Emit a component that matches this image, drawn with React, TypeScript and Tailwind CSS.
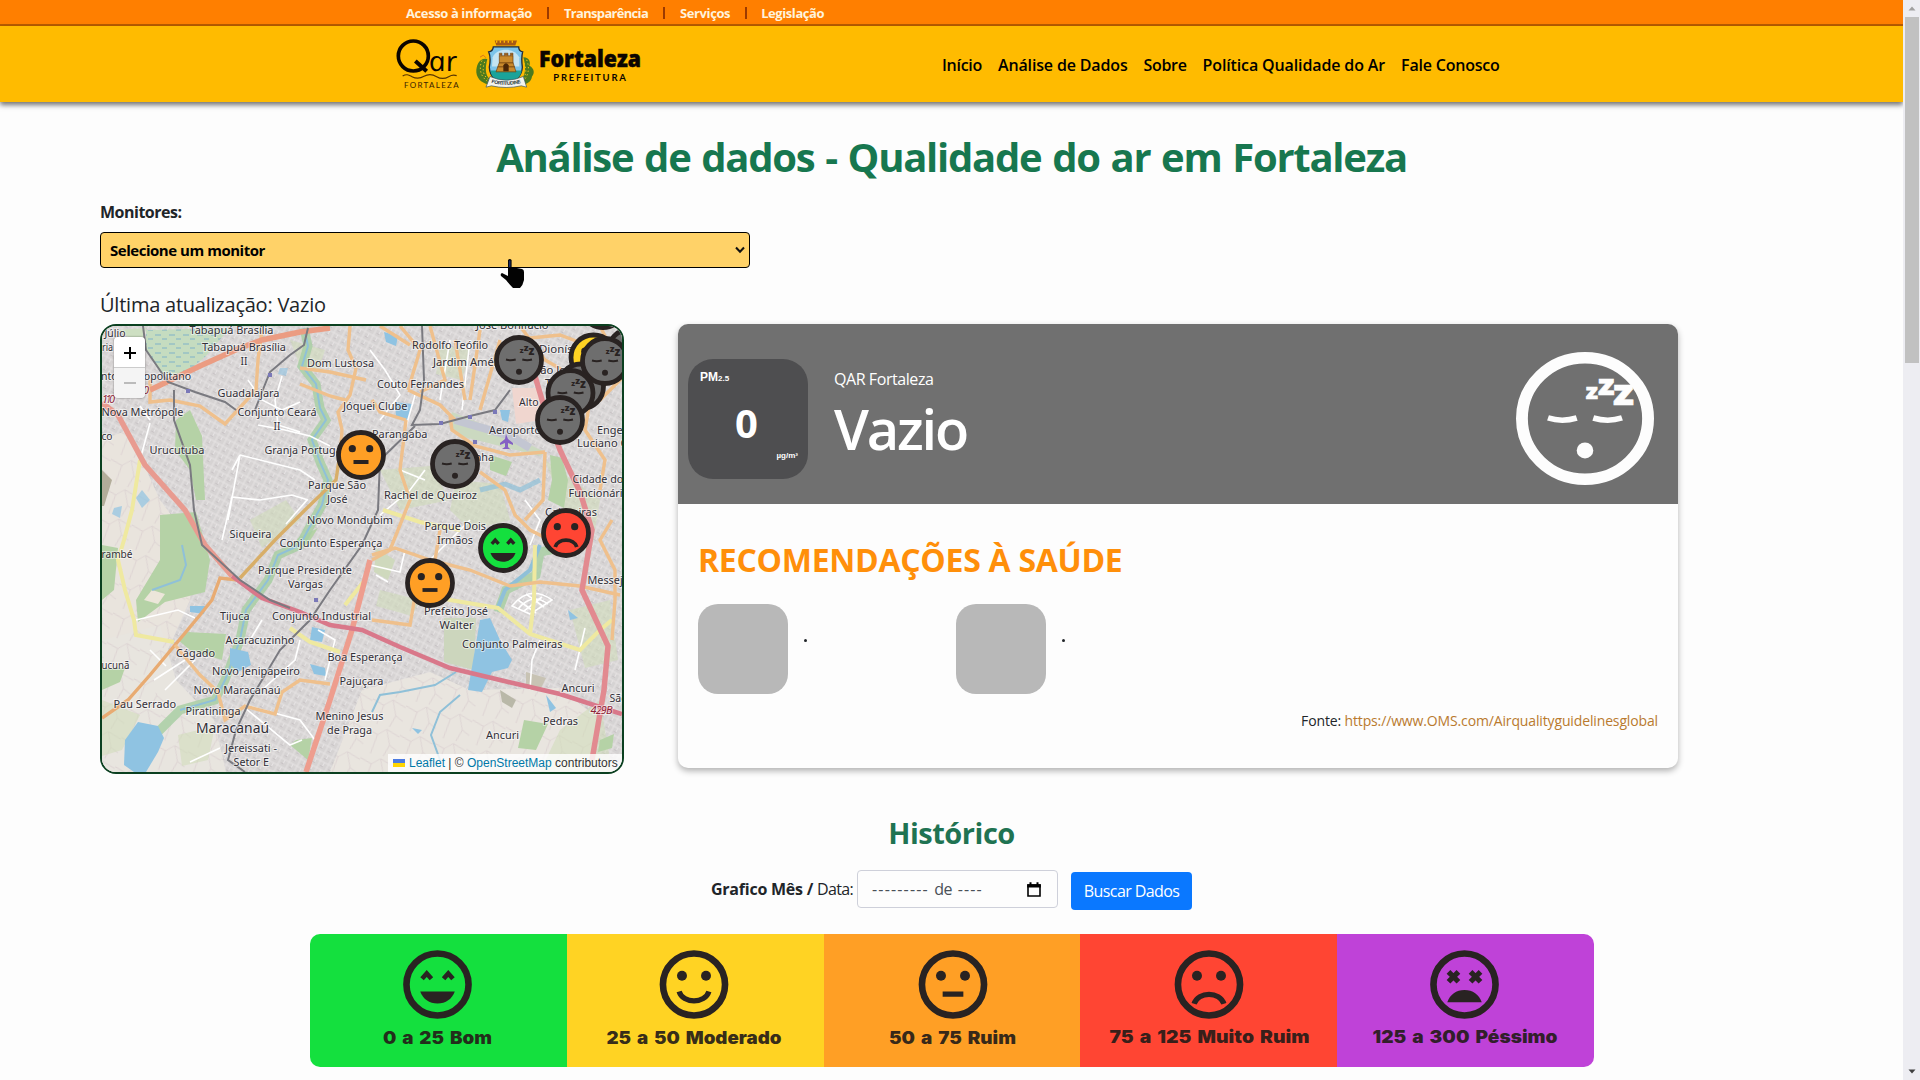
import React from "react";

type Mood = "good" | "moderate" | "neutral" | "sad" | "dead" | "sleep";

const moodColor: Record<Mood, string> = {
  good: "#14e03e",
  moderate: "#ffd323",
  neutral: "#ff9f25",
  sad: "#ff4533",
  dead: "#bf42d8",
  sleep: "#6e6e6e",
};

/* Face drawn around the origin, 25 units in radius */
function Face({ mood, fill, ink = "#292322" }: { mood: Mood; fill: string; ink?: string }) {
  return (
    <g>
      <circle r="22.5" fill={fill} stroke={ink} strokeWidth="4.8" />
      {(mood === "moderate" || mood === "neutral" || mood === "sad") && (
        <g fill={ink}>
          <circle cx="-8.7" cy="-6.3" r="3.6" />
          <circle cx="8.7" cy="-6.3" r="3.6" />
        </g>
      )}
      {mood === "good" && (
        <g>
          <path d="M-11.2 -4.2L-7.8 -8L-4.4 -4.2M4.4 -4.2L7.8 -8L11.2 -4.2" fill="none" stroke={ink} strokeWidth="3.4" />
          <path d="M-12.5 5H12.5C10.5 10.500 6 13.700 0 13.700S-10.500 10.500 -12.500 5Z" fill={ink} />
        </g>
      )}
      {mood === "moderate" && <path d="M-10.8 5C-8 14.200 8 14.200 10.800 5" fill="none" stroke={ink} strokeWidth="3.8" />}
      {mood === "neutral" && <path d="M-7.500 7H7.500" stroke={ink} strokeWidth="3.8" />}
      {mood === "sad" && <path d="M-10.800 14C-8 4.800 8 4.800 10.800 14" fill="none" stroke={ink} strokeWidth="3.8" />}
      {mood === "dead" && (
        <g>
          <path d="M-11.600 -9.200L-4.400 -2M-4.400 -9.200L-11.600 -2M4.400 -9.200L11.600 -2M11.600 -9.200L4.400 -2" stroke={ink} strokeWidth="3.800" />
          <path d="M-12.500 12.800H12.500C10.500 7.300 6 4 0 4S-10.500 7.300 -12.500 12.800Z" fill={ink} />
        </g>
      )}
      {mood === "sleep" && (
        <g>
          <path d="M-13 -.500Q-8.300 1 -3.300 -.500M3.300 -.500Q8.300 1 13 -.500" fill="none" stroke={ink} strokeWidth="1.900" />
          <circle cy="11.700" r="3" fill={ink} />
          <g fill={ink} fontFamily="'Open Sans', sans-serif" fontWeight="800">
            <text x=".8" y="-7.400" fontSize="7.500">z</text>
            <text x="4.800" y="-9" fontSize="9.500">z</text>
            <text x="9.500" y="-5.200" fontSize="11.500">z</text>
          </g>
        </g>
      )}
    </g>
  );
}

function QarLogo() {
  return (
    <svg viewBox="50 115 192 156" className="h-[52px] w-16">
      <g fill="#0b0500" fontFamily="Lato, sans-serif">
        <circle cx="102" cy="169" r="45" fill="none" stroke="#0b0500" strokeWidth="11" />
        <path d="M108 184L142 215" stroke="#0b0500" strokeWidth="12" />
        <g transform="translate(153 215) skewX(12)">
          <text fontFamily="'Open Sans', sans-serif" fontStyle="italic" fontSize="83" textLength="86" lengthAdjust="spacingAndGlyphs">ar</text>
        </g>
        <path d="M70 229C82 222 88 226 98 231S120 238 134 230S160 224 172 231S196 238 208 231S226 226 232 228" fill="none" stroke="#5a3600" strokeWidth="3.500" />
        <text x="74" y="265" fontSize="24" textLength="164" fill="#3a2200">FORTALEZA</text>
      </g>
    </svg>
  );
}

function CoatOfArms() {
  return (
    <svg viewBox="285 115 180 155" className="h-[52px] w-[60px]">
      <g fill="#4c7a1e">
        <path d="M322 178C300 172 288 195 289 218C291 240 312 255 336 254L330 238C314 226 316 200 322 178Z" />
        <path d="M430 172C450 172 452 190 448 198C464 206 464 222 456 230C454 246 440 256 420 254L424 238C438 222 438 200 430 172Z" />
      </g>
      <g stroke="#f5c21c" strokeWidth="3" strokeDasharray="4 7" fill="none">
        <path d="M306 182C296 205 300 232 328 248M314 186C306 208 308 226 326 240" />
        <path d="M440 180C450 204 446 232 424 248M432 190C440 208 440 226 426 240" />
      </g>
      <path d="M300 172L310 166L318 174" stroke="#d8751c" strokeWidth="3" fill="none" />
      <path d="M344 122H411L406 137H349Z" fill="#a85a14" />
      <path d="M350 122V129M361 122V129M373 122V129M385 122V129M397 122V129" stroke="#ffba00" strokeWidth="4" />
      <path d="M340 141H416C416 151 421 155 428 156C424 170 425 186 427 202C426 232 402 244 378 258C350 244 329 232 328 202C331 186 332 170 326 156C335 155 339 151 340 141Z" fill="#7cc4ea" stroke="#1f2a3a" strokeWidth="4" />
      <path d="M338 172C346 156 360 150 378 150S410 158 418 172V200H336Z" fill="#c4e4f2" />
      <path d="M331 212H425C422 236 400 246 378 256C354 246 334 236 331 212Z" fill="#1aa39a" />
      <path d="M348 216L358 188V168H399V188L408 216Z" fill="#c98a2c" stroke="#6b3c0c" strokeWidth="2" />
      <path d="M358 168V160H366V168M373 168V160H384V168M391 168V160H399V168" fill="#9b5f1c" stroke="#6b3c0c" strokeWidth="1.500" />
      <path d="M357 189H400M353 201H404" stroke="#6b3c0c" strokeWidth="2.500" />
      <path d="M370 214V196Q378 184 386 196V214Z" fill="#4a2606" />
      <path d="M318 262L330 230Q378 252 430 230L440 262L424 258Q378 268 334 258Z" fill="#f4f4ee" stroke="#34505c" strokeWidth="2" />
      <path id="motto" d="M334 249Q380 262 428 248" fill="none" />
      <text fontFamily="'Liberation Sans', sans-serif" fontWeight="700" fontSize="15" fill="#26323a">
        <textPath href="#motto" textLength="90">FORTITUDINE</textPath>
      </text>
    </svg>
  );
}

/* Place name, left edge, baseline, drawn width */
const places: [string, number, number, number][] = [
  ["Júlio", 104.500, 337, 21],
  ["ria", 102, 351, 11],
  ["nto Metropolitano", 101, 379.500, 90],
  ["Tabapuá Brasília", 189.500, 334, 84],
  ["Tabapuá Brasília", 202, 350.500, 84],
  ["II", 240.500, 364.500, 7],
  ["Guadalajara", 217.500, 396.500, 62],
  ["Conjunto Ceará", 237.500, 416, 79],
  ["II", 273.500, 430, 7],
  ["Nova Metrópole", 101.500, 416, 82],
  ["co", 101.500, 439.500, 11],
  ["Urucutuba", 149.500, 454, 55],
  ["Granja Portugal", 264.500, 454, 80],
  ["Dom Lustosa", 307, 366.500, 67],
  ["Jóquei Clube", 343, 410, 64.500],
  ["Parque São", 308, 488.500, 58],
  ["José", 327, 503, 20.500],
  ["Novo Mondubim", 307, 523.500, 86],
  ["Siqueira", 229.500, 537.500, 42],
  ["Conjunto Esperança", 279.500, 547, 103],
  ["José Bonifácio", 476, 329, 72.500],
  ["Rodolfo Teófilo", 412, 348.500, 76],
  ["Jardim América", 433, 366, 80],
  ["Couto Fernandes", 377, 388, 87],
  ["Dionísio Torres", 539, 352.500, 80],
  ["São João do", 534, 373.500, 62],
  ["Tauape", 545, 387, 40],
  ["Alto", 519, 405.500, 19.500],
  ["Aeroporto", 489, 434, 52],
  ["Parangaba", 372, 438, 55.500],
  ["Engenheiro", 597, 433.500, 59],
  ["Luciano Cavalcante", 577, 447, 100],
  ["Cidade dos", 572.500, 482.500, 56],
  ["Funcionários", 568.500, 496.500, 66],
  ["Cajazeiras", 545, 516, 52],
  ["Serrinha", 451, 461, 43],
  ["Rachel de Queiroz", 384, 499, 93],
  ["Parque Dois", 424.500, 530, 61.500],
  ["Irmãos", 437, 544, 36],
  ["rambé", 101.500, 557.500, 31],
  ["Parque Presidente", 258, 573.500, 94],
  ["Vargas", 288, 588, 35],
  ["Tijuca", 220, 619.500, 29.500],
  ["Conjunto Industrial", 272, 619.500, 99],
  ["Acaracuzinho", 225.500, 644, 69],
  ["Cágado", 176, 656.500, 39],
  ["Boa Esperança", 327.500, 660.500, 75],
  ["ucunã", 101.500, 668.500, 28],
  ["Novo Jenipapeiro", 212, 674.500, 88],
  ["Pajuçara", 339.500, 685, 44],
  ["Novo Maracanaú", 193.500, 693.500, 87],
  ["Pau Serrado", 113.500, 708, 62.500],
  ["Piratininga", 185.500, 714.500, 55],
  ["Menino Jesus", 315.500, 720, 68],
  ["de Praga", 327, 734, 45],
  ["Jereissati -", 225, 751.500, 52],
  ["Setor E", 233.500, 766, 35.500],
  ["Messejana", 587.500, 583.500, 54],
  ["Prefeito José", 424, 615, 64],
  ["Walter", 439.500, 629, 34],
  ["Conjunto Palmeiras", 462, 648, 100.500],
  ["Ancuri", 561.500, 691.500, 33],
  ["São Bento", 609.500, 702, 50],
  ["Pedras", 543, 724.500, 35],
  ["Ancuri", 486, 739, 33],
];

const markers: [number, number, Mood][] = [
  [603, 305, "sleep"],
  [630, 352, "sleep"],
  [361, 455, "neutral"],
  [593.500, 357.500, "moderate"],
  [581, 386.500, "sleep"],
  [605, 361, "sleep"],
  [570.500, 393, "sleep"],
  [519, 360, "sleep"],
  [560, 420, "sleep"],
  [455, 464, "sleep"],
  [503, 548, "good"],
  [566, 533, "sad"],
  [430, 583, "neutral"],
];

function MapCanvas() {
  return (
    <svg viewBox="102 326 520 446" className="block h-[446px] w-[520px]">
      <defs>
        <pattern id="streets" width="9" height="8" patternUnits="userSpaceOnUse" patternTransform="rotate(28)">
          <rect width="9" height="8" fill="#d6d3d3" />
          <path d="M0 1H9M1 0V8M5.500 1V5" stroke="#e6e3e4" strokeWidth="1" />
          <path d="M3 5.500H6" stroke="#c4bfc1" strokeWidth=".8" />
        </pattern>
        <pattern id="rural" width="34" height="30" patternUnits="userSpaceOnUse" patternTransform="rotate(12)">
          <path d="M0 6L12 10L20 3L34 8M12 10L9 30M20 3L26 18L22 30M26 18L34 22" fill="none" stroke="#dcd3d2" strokeWidth=".9" />
        </pattern>
        <pattern id="marsh" width="14" height="9" patternUnits="userSpaceOnUse">
          <rect width="14" height="9" fill="#c5dcc0" />
          <path d="M1 2H7M8 6H13" stroke="#7fb3c8" strokeWidth="1" />
        </pattern>
      </defs>
      <rect x="102" y="326" width="520" height="446" fill="url(#streets)" />

      {/* open land */}
      <path d="M102 440L128 430L160 500L196 548L190 600L150 690L102 700Z" fill="#e9e4dd" />
      <path d="M102 640L160 625L176 680L214 720L226 772H102Z" fill="#e8e5df" />
      <path d="M362 690L430 672L470 690L560 688L600 720L590 772H330Z" fill="#e9e5df" />
      <path d="M102 440L128 430L160 500L196 548L190 600L150 690L214 720L226 772H102Z" fill="url(#rural)" />
      <path d="M362 690L430 672L470 690L560 688L600 720L590 772H330Z" fill="url(#rural)" />

      {/* lightly wooded blocks */}
      <g fill="#cfdcb8" opacity=".55">
        <path d="M380 470L430 466L450 500L400 510Z" />
        <path d="M456 480L500 484L510 520L470 530L450 510Z" />
        <path d="M570 610L610 600L618 660L585 668Z" />
        <path d="M545 460L600 500L590 560L560 500Z" />
        <path d="M380 590L420 600L412 616L376 606Z" />
        <path d="M560 730L600 700L612 772H540Z" />
        <path d="M290 340L325 350L318 372L300 366Z" />
        <path d="M440 345L470 350L462 380L436 374Z" />
        <path d="M102 700L140 715L122 750L102 756Z" />
        <path d="M178 735L215 726L208 760L182 766Z" />
        <path d="M250 520L286 500L300 520L262 548Z" />
      </g>

      {/* vegetation */}
      <g fill="#b5d2a6">
        <path d="M146 330L230 328L206 356L180 378L160 372L146 350Z" fill="url(#marsh)" />
        <path d="M176 420L190 410L202 436L205 500L196 500L190 470L175 450Z" />
        <path d="M160 515L196 512L210 560L205 592L165 602L138 622L136 600L160 560Z" />
        <path d="M102 545L118 548L114 590L102 600Z" />
        <path d="M102 470L112 480L104 506H102Z" fill="#b3ad9a" />
        <path d="M186 632L226 634L222 660L190 650L178 640Z" />
        <path d="M102 668L125 668L120 682L102 690Z" />
        <path d="M296 740L312 738L308 760L290 745Z" />
        <path d="M452 412L482 424L520 440L545 452L540 456L500 446L460 436L448 424Z" fill="#cbd9c0" />
        <path d="M550 455L562 458L568 480L564 508L548 500L552 480Z" />
        <path d="M444 618L476 618L474 670L444 662Z" fill="#ccd6bd" />
        <path d="M524 720L548 724L536 750L518 748Z" />
        <path d="M376 548L395 560L388 580L374 572Z" fill="#cfd9bd" />
        <path d="M600 740L614 734L612 748L598 752Z" />
        <path d="M526 672L546 678L540 690L526 684Z" fill="#c8c3b4" />
        <path d="M500 690L516 700L512 708L502 702Z" fill="#b9b8a8" />
        <path d="M118 330L146 328L140 345Z" fill="#cddfc2" />
        <path d="M490 455L512 462L506 476L490 470Z" />
        <path d="M298 538L318 528L308 544L292 548Z" />
      </g>
      <path d="M152 590L165 594L158 604L144 600Z" fill="#ece6da" />
      <path d="M512 388H541V420L516 424Z" fill="#f0d6cf" />
      <path d="M455 420L510 436L530 448" stroke="#c3c6d2" strokeWidth="8" fill="none" />

      {/* rivers with green banks */}
      <g fill="none" stroke="#a9cfa4" strokeWidth="9" opacity=".85">
        <path d="M304 328L308 346L302 366L316 384L320 408L326 420L312 440L320 462L328 480L322 505L308 530L300 545L278 555L268 580L246 610L240 640L225 680L215 700L180 710L150 740" />
        <path d="M560 548L540 552L536 575L506 590L498 612" />
      </g>
      <g fill="none" stroke="#8fc0d8" strokeWidth="2">
        <path d="M304 328L308 346L302 366L316 384L320 408L326 420L312 440L320 462L328 480L322 505L308 530L300 545L278 555L268 580L246 610L240 640L225 680L215 700L180 710" />
        <path d="M182 545L186 565L180 580L152 590" />
        <path d="M456 672L435 685L400 692L380 695L372 712" />
        <path d="M460 695L440 712L431 735L440 760" />
        <path d="M540 480L520 490L505 484L480 490" strokeWidth="5" opacity=".7" />
        <path d="M540 545L530 570L505 590L497 610" strokeWidth="4" />
      </g>

      {/* lakes */}
      <g fill="#8fc3e2">
        <path d="M125 740L138 722L158 726L164 738L158 752L146 772H134L124 765Z" />
        <path d="M230 648L248 652L251 665L238 672L230 664Z" />
        <path d="M312 627L325 630L322 642L310 640Z" />
        <path d="M310 664L325 668L326 676L314 674Z" />
        <path d="M190 606L206 606L204 614L190 612Z" />
        <path d="M480 620L490 618L500 640L512 660L508 668L492 672L482 692L468 690L474 655Z" />
        <path d="M395 402L412 404L408 420L396 416Z" />
        <path d="M384 332L398 336L396 346L386 342Z" />
        <path d="M568 610L578 618L570 620Z" />
        <path d="M546 695L556 708L550 712Z" />
        <path d="M280 368L288 368L286 376L278 374Z" opacity=".6" />
        <path d="M142 490L150 500L142 508L136 498Z" opacity=".7" />
        <path d="M500 410L510 410L508 422L502 420Z" />
        <path d="M412 728L422 730L418 734Z" />
        <path d="M114 508L122 506L120 518L112 514Z" opacity=".7" />
      </g>

      {/* tertiary streets */}
      <g fill="none" stroke="#fff" strokeWidth="1.600">
        <path d="M240 455L300 470L315 480M232 497L260 500L292 495L308 500M232 497L222 540M240 455L228 520M248 380L262 400L282 410L300 402M282 376L275 400L278 425L300 432M258 425L285 430L310 436L330 446M286 524L307 500M232 470L240 455M140 406L150 420M150 423L140 460" />
        <path d="M136 620L178 610L195 618M150 650L166 666M154 680L185 660M165 690L195 660M250 640L262 620M300 640L295 660L262 690M318 630L335 640L325 680M245 705L300 720L315 740M245 708L290 745L302 740M190 762L220 748" />
        <path d="M380 515L410 490L425 470M400 470L425 480M415 395L405 430M370 350L385 370L400 395L380 420M450 340L440 400M470 340L462 410M370 565L400 572L405 550M376 575L388 582M410 620L414 600L420 590M530 690L532 660L540 640M430 560L450 540L470 520M585 628L575 670M525 500L540 520L530 545" />
        <path d="M512 606Q530 584 552 600L530 614ZM518 609Q532 592 548 604M524 611L542 597M518 600L536 613M526 594L544 607" />
      </g>

      {/* secondary roads */}
      <g fill="none" stroke="#efe9a0" strokeWidth="4">
        <path d="M140 460L132 510L124 540L118 560L125 590L134 620L136 635L174 642" />
        <path d="M290 628L310 642L340 652M420 592L450 600L498 608L530 634L580 650L600 630L612 620" />
        <path d="M535 545L534 600L530 634M365 580L345 605" />
        <path d="M383 510L420 522L460 530" />
      </g>
      <g fill="none" stroke="#efc08c" strokeWidth="3.400">
        <path d="M262 330L258 360L256 390L225 424L200 406L170 400L150 402L150 380" />
        <path d="M300 368L330 372L366 380M350 326L348 350L356 368L350 395L338 412L342 430L340 460M300 384L330 396L345 400" />
        <path d="M102 718L128 700L150 675L175 645L200 615L212 600L220 578L238 580" stroke="#e8ab72" />
        <path d="M175 645L200 675L218 692L225 720L245 706L275 714L282 692L300 680L330 684" />
        <path d="M342 440L336 480L305 510L275 540L240 578" stroke="#d8ae68" />
        <path d="M400 326L420 350L408 390M408 390L440 405L455 420M430 326L445 380L420 392M455 340L465 400M480 330L470 400M500 340L480 410M406 420L380 412L372 400M406 420L400 470L410 500L390 550L372 560" />
        <path d="M450 416L452 430L475 446L510 455L545 452M480 472L505 490L515 515L530 530L560 545L590 540M545 452L543 500L525 520M520 326L545 360L580 380M510 340L560 335L600 350M560 390L600 400L622 378M590 400L585 430L605 460L600 490" />
        <path d="M372 555L395 548L430 560L470 570L510 586L540 582L580 586L620 595M372 620L410 625L416 590M612 520L600 540L615 570L615 600L612 640" />
        <path d="M440 530L435 560M380 326L410 345M600 326L612 350" />
      </g>

      {/* trunk roads and motorways */}
      <g fill="none" stroke="#e6928c" strokeWidth="5.500">
        <path d="M102 403L118 415L145 465L185 510L205 545L232 576" stroke="#e89b90" />
        <path d="M150 390L200 366L240 348L262 340L300 332L330 328" stroke="#eb9c82" />
        <path d="M370 560L352 630L330 700L306 772" stroke="#ee9d8e" />
        <path d="M535 376L545 410L560 450L580 492L592 530L582 590L608 646L604 690L592 760" stroke="#e28a90" />
      </g>
      <g fill="none" stroke="#d9788a" strokeWidth="4.500">
        <path d="M232 576L262 598L300 612L330 625L362 630L400 647L450 668L500 680L560 694L622 714" />
      </g>

      {/* railways */}
      <g fill="none" stroke="#7a7a80" strokeWidth="2">
        <path d="M143 326L146 350L168 382L195 392L225 402L236 410M255 410L262 392L270 372L290 355L304 345L308 328" />
        <path d="M174 390L174 420L190 465L194 510L202 545L240 580L270 600L290 608" />
        <path d="M422 326L424 380L420 410L412 425L440 424L470 416L495 410L510 390M415 426L380 460L378 510L362 545L330 590L310 620L280 650L250 700L236 730L228 760L245 772" />
      </g>
      <g fill="#7a78b8">
        <rect x="186" y="389" width="4" height="4" />
        <rect x="268" y="373" width="4" height="4" />
        <rect x="439" y="421" width="4" height="4" />
        <rect x="468" y="415" width="4" height="4" />
        <rect x="493" y="410" width="4" height="4" />
        <rect x="473" y="440" width="4" height="4" />
        <rect x="314" y="598" width="4" height="4" />
      </g>
      <path d="M506 434L508 439L513 443V445L508 443V447L510 449H502L505 447V443L500 445V443L505 439Z" fill="#8461c4" />

      <g fontFamily="'Noto Sans', sans-serif" fontSize="11" fill="#333038" stroke="#fff" strokeOpacity=".55" strokeWidth="2" style={{ paintOrder: "stroke" }}>
        {places.map(([name, x, y, w], i) => (
          <text key={i} x={x} y={y} textLength={w} lengthAdjust="spacingAndGlyphs">
            {name}
          </text>
        ))}
        <text x="196" y="733" fontSize="13.500" textLength="73" lengthAdjust="spacingAndGlyphs">
          Maracanaú
        </text>
        <g fill="#8f2438" fontStyle="italic">
          <text x="102" y="403" textLength="13">110</text>
          <text x="136" y="394" textLength="13">060</text>
          <text x="590.500" y="713.500" textLength="22">429B</text>
        </g>
      </g>

      {markers.map(([x, y, mood], i) => (
        <g key={i} transform={`translate(${x} ${y})`}>
          <Face mood={mood} fill={moodColor[mood]} />
        </g>
      ))}
    </svg>
  );
}

function HandCursor() {
  return (
    <svg viewBox="0 0 25 31" className="absolute left-[399px] top-[25px] h-[31px] w-[25px]">
      <path d="M8 2Q9.800 0 11.600 2V9L22 11Q24 11.500 24 14V22Q23 27 20 30H13Q9 26 6 22L1 18Q0 16 2 15L8 18Z" fill="#030303" />
      <path d="M9.700 2.500V9" stroke="#1b2a66" strokeWidth="1.600" />
    </svg>
  );
}

const legend: { mood: Mood; label: string; width: number; faceX: number; textX: number; baseline: number; bg: string }[] = [
  { mood: "good", label: "0 a 25 Bom", width: 109, faceX: 127.500, textX: 73, baseline: 110, bg: "bg-[#14e03e]" },
  { mood: "moderate", label: "25 a 50 Moderado", width: 175, faceX: 127, textX: 39.500, baseline: 110, bg: "bg-[#ffd323]" },
  { mood: "neutral", label: "50 a 75 Ruim", width: 127, faceX: 129, textX: 65, baseline: 110, bg: "bg-[#ff9f25]" },
  { mood: "sad", label: "75 a 125 Muito Ruim", width: 200, faceX: 129, textX: 29.500, baseline: 109, bg: "bg-[#ff4533]" },
  { mood: "dead", label: "125 a 300 Péssimo", width: 185, faceX: 127.500, textX: 35.500, baseline: 109, bg: "bg-[#bf42d8]" },
];

function TopDivider() {
  return <span className="mt-0.5 h-3 w-0.5 bg-[#9c3a00]" />;
}

export default function App() {
  return (
    <div className="flex h-[1080px] w-[1920px] overflow-hidden bg-[#fdfdfd] font-['Open_Sans',sans-serif] text-[#212529]">
      <div className="w-[1903px] shrink-0">
        <div className="flex h-[26px] items-center gap-[15px] border-b-2 border-[#b85c00] bg-[#ff7f00] pl-[406px] text-[13px] font-bold leading-6 text-[#fff3dc]">
          <a className="pt-0.5 tracking-[-0.4px]">Acesso à informação</a>
          <TopDivider />
          <a className="pt-0.5 tracking-[-0.69px]">Transparência</a>
          <TopDivider />
          <a className="pt-0.5 tracking-[-0.4px]">Serviços</a>
          <TopDivider />
          <a className="-ml-px pt-0.5 tracking-[-0.42px]">Legislação</a>
        </div>

        <header className="flex h-[76px] items-center bg-[#ffbb00] pl-[396px] shadow-[0_3px_5px_rgba(0,0,0,0.55)]">
          <QarLogo />
          <div className="ml-[15px]">
            <CoatOfArms />
          </div>
          <div className="ml-1 flex w-[103px] flex-col items-center text-[#0b0500]">
            <svg viewBox="0 0 103 24" className="block h-6 w-[103px]">
              <text x="0" y="22.500" fontFamily="'Open Sans', sans-serif" fontWeight="800" fontSize="23.500" textLength="102" lengthAdjust="spacingAndGlyphs" stroke="#0b0500" strokeWidth=".5" fill="#0b0500">
                Fortaleza
              </text>
            </svg>
            <span className="mt-[3px] font-['Lato'] text-[9.500px] font-bold leading-[14px] tracking-[1.800px]">PREFEITURA</span>
          </div>
          <nav className="ml-[300px] mt-px flex gap-4 text-base font-semibold text-black">
            <a className="tracking-[-0.28px]">Início</a>
            <a className="tracking-[-0.15px]">Análise de Dados</a>
            <a className="tracking-[-0.33px]">Sobre</a>
            <a className="tracking-[-0.13px]">Política Qualidade do Ar</a>
            <a className="tracking-[-0.2px]">Fale Conosco</a>
          </nav>
        </header>

        <h1 className="pt-[31px] text-center text-[40px] font-bold leading-[47px] tracking-[-1.250px] text-[#17774f] [word-spacing:1.600px]">
          Análise de dados - Qualidade do ar em Fortaleza
        </h1>

        <section className="mt-5 pl-[100px]">
          <div className="text-base font-bold leading-6 tracking-[-0.500px]">Monitores:</div>
          <div className="relative mt-2 flex h-9 w-[650px] items-center justify-between rounded border border-black bg-[#ffd268] pl-[9px] pr-1 text-[15px] font-bold tracking-[-0.470px] text-black">
            <span>Selecione um monitor</span>
            <svg viewBox="0 0 10 8" className="h-2 w-[10px]">
              <path d="M1 1.500L5 5.800L9 1.500" fill="none" stroke="#111" strokeWidth="2" />
            </svg>
            <HandCursor />
          </div>
          <div className="mt-[23px] text-[20px] leading-7 tracking-[-0.230px]">Última atualização: Vazio</div>

          <div className="mt-[5px] flex h-[450px] items-start gap-[54px]">
            <div className="relative h-[450px] w-[524px] overflow-hidden rounded-[16px] border-2 border-[#0b4020]">
              <MapCanvas />
              <div className="absolute left-[12px] top-[11px] w-[31px] overflow-hidden rounded shadow-[0_0_2px_rgba(0,0,0,0.5)]">
                <div className="flex h-[31px] items-center justify-center border-b border-[#cccccc] bg-white pt-0.5">
                  <svg viewBox="0 0 12 12" className="size-3">
                    <path d="M6 0V12M0 6H12" stroke="#000" strokeWidth="2" />
                  </svg>
                </div>
                <div className="flex h-[30px] items-center justify-center bg-[#f4f4f4]">
                  <span className="h-0.5 w-3 bg-[#bbbbbb]" />
                </div>
              </div>
              <div className="absolute bottom-0 right-0 flex h-[18px] w-[234px] items-center bg-white/80 pl-[5px] font-['Liberation_Sans'] text-[12px] text-[#333333]">
                <span className="mr-1 flex h-2 w-3 flex-col">
                  <span className="h-1 bg-[#4c7be1]" />
                  <span className="h-1 bg-[#ffd500]" />
                </span>
                <span className="whitespace-pre">
                  <span className="text-[#0078a8]">Leaflet</span> | © <span className="text-[#0078a8]">OpenStreetMap</span> contributors
                </span>
              </div>
            </div>

            <article className="h-[444px] w-[1000px] overflow-hidden rounded-[10px] bg-[#fdfdfd] shadow-[0_3px_6px_rgba(0,0,0,0.3)]">
              <div className="flex h-[180px] bg-[#707070] pl-[10px] text-white">
                <div className="mt-[35px] flex size-[120px] flex-col rounded-[25px] bg-[#4e4e50] px-3 pt-3 font-['Liberation_Sans'] text-[12px] font-bold">
                  <div className="leading-3">
                    PM<span className="text-[8px]">2.5</span>
                  </div>
                  <div className="-ml-1 mt-[18px] text-center font-['Open_Sans'] text-[40px] leading-10 tracking-[-1px]">0</div>
                  <div className="-mr-0.5 mt-2 text-right text-[8px] leading-[10px]">µg/m³</div>
                </div>
                <div className="ml-[25px] mt-[43px] grow">
                  <div className="pl-px text-base leading-6 tracking-[-0.430px]">QAR Fortaleza</div>
                  <div className="mt-[5px] pl-px text-[56px] font-semibold leading-[64px] tracking-[-2.200px]">Vazio</div>
                </div>
                <svg viewBox="-25 -25 50 50" preserveAspectRatio="none" className="mr-6 mt-7 h-[133px] w-[138px] overflow-visible">
                  <circle r="22.850" fill="none" stroke="#fdfdfd" strokeWidth="4.300" />
                  <path d="M-13.400 -.200Q-8.300 1.500 -3 -.200M3 -.200Q8.300 1.500 13.400 -.200" fill="none" stroke="#fdfdfd" strokeWidth="2.100" />
                  <circle cy="12" r="3" fill="#fdfdfd" />
                  <g fill="#fdfdfd" stroke="#fdfdfd" strokeWidth=".25" fontFamily="'Open Sans', sans-serif" fontWeight="800">
                    <text x=".3" y="-7.300" fontSize="8" textLength="4.400" lengthAdjust="spacingAndGlyphs">z</text>
                    <text x="4.700" y="-8.900" fontSize="10.300" textLength="6" lengthAdjust="spacingAndGlyphs">z</text>
                    <text x="10.100" y="-5.200" fontSize="13" textLength="7.600" lengthAdjust="spacingAndGlyphs">z</text>
                  </g>
                </svg>
              </div>
              <div className="pl-5 pr-5 pt-9">
                <h2 className="text-[32px] font-bold leading-10 tracking-[-0.280px] text-[#ff8f0a]">RECOMENDAÇÕES À SAÚDE</h2>
                <div className="mt-6 flex gap-[168px]">
                  <div className="relative size-[90px] rounded-[20px] bg-[#b8b8b8]">
                    <span className="absolute left-[106px] top-[35px] size-[3px] rounded-full bg-[#212529]" />
                  </div>
                  <div className="relative size-[90px] rounded-[20px] bg-[#b8b8b8]">
                    <span className="absolute left-[106px] top-[35px] size-[3px] rounded-full bg-[#212529]" />
                  </div>
                </div>
                <p className="mt-[17px] text-right text-[14px] leading-5 tracking-[-0.140px]">
                  Fonte: <a className="text-[#b97a2e]">https://www.OMS.com/Airqualityguidelinesglobal</a>
                </p>
              </div>
            </article>
          </div>
        </section>

        <h2 className="mt-[41px] text-center text-[29px] font-bold leading-9 tracking-[-0.480px] text-[#1f7352]">Histórico</h2>

        <form className="mt-[19px] flex justify-center">
          <label className="flex h-[38px] items-center whitespace-pre text-base tracking-[-0.230px]">
            <b>Grafico Mês / </b>
            <span className="tracking-[-0.660px]">Data:</span>
          </label>
          <div className="ml-[4px] flex h-[38px] w-[201px] items-center justify-between rounded border border-[#ced0da] bg-[#fdfdfd] pl-[14px] pr-4 text-base text-[#495057]">
            <span className="whitespace-pre tracking-[1.160px]">--------- <span className="tracking-[-0.300px]">de</span> ----</span>
            <svg viewBox="0 0 14 15" className="h-[15px] w-[14px]">
              <path d="M1 3H13V14H1Z" fill="none" stroke="#000" strokeWidth="1.600" />
              <path d="M.2 2.200H13.800V5.600H.2ZM2.500 .3H4.500V3H2.500ZM9.500 .3H11.500V3H9.500Z" fill="#000" />
            </svg>
          </div>
          <button type="button" className="ml-[13px] mt-0.5 h-[38px] w-[121px] rounded bg-[#0a78ff] text-base tracking-[-0.600px] text-white">
            Buscar Dados
          </button>
        </form>

        <div className="mt-6 ml-[310px] grid h-[133px] w-[1284px] grid-cols-5 overflow-hidden rounded-[10px]">
          {legend.map((item) => (
            <div key={item.mood} className={item.bg}>
              <svg viewBox="0 0 257 133" className="block h-[133px] w-[257px]">
                <g transform={`translate(${item.faceX} 50.500) scale(1.380)`}>
                  <Face mood={item.mood} fill="none" />
                </g>
                <text x={item.textX} y={item.baseline} fontFamily="Inter, sans-serif" fontWeight="900" fontSize="17.500" wordSpacing="2" textLength={item.width} lengthAdjust="spacingAndGlyphs" fill="#241c18" fillOpacity=".92">
                  {item.label}
                </text>
              </svg>
            </div>
          ))}
        </div>
      </div>

      <div className="flex w-[17px] flex-col items-center justify-between bg-[#ededf2]">
        <div className="flex w-full flex-col items-center">
          <svg viewBox="0 0 16 17" className="h-[17px] w-4">
            <path d="M4.500 10.500L8 6.500L11.500 10.500Z" fill="#a0a0a0" />
          </svg>
          <div className="h-[346px] w-[14px] bg-[#c1c1c1]" />
        </div>
        <svg viewBox="0 0 16 17" className="h-[17px] w-4">
          <path d="M4.500 6.500L8 10.500L11.500 6.500Z" fill="#404040" />
        </svg>
      </div>
    </div>
  );
}
